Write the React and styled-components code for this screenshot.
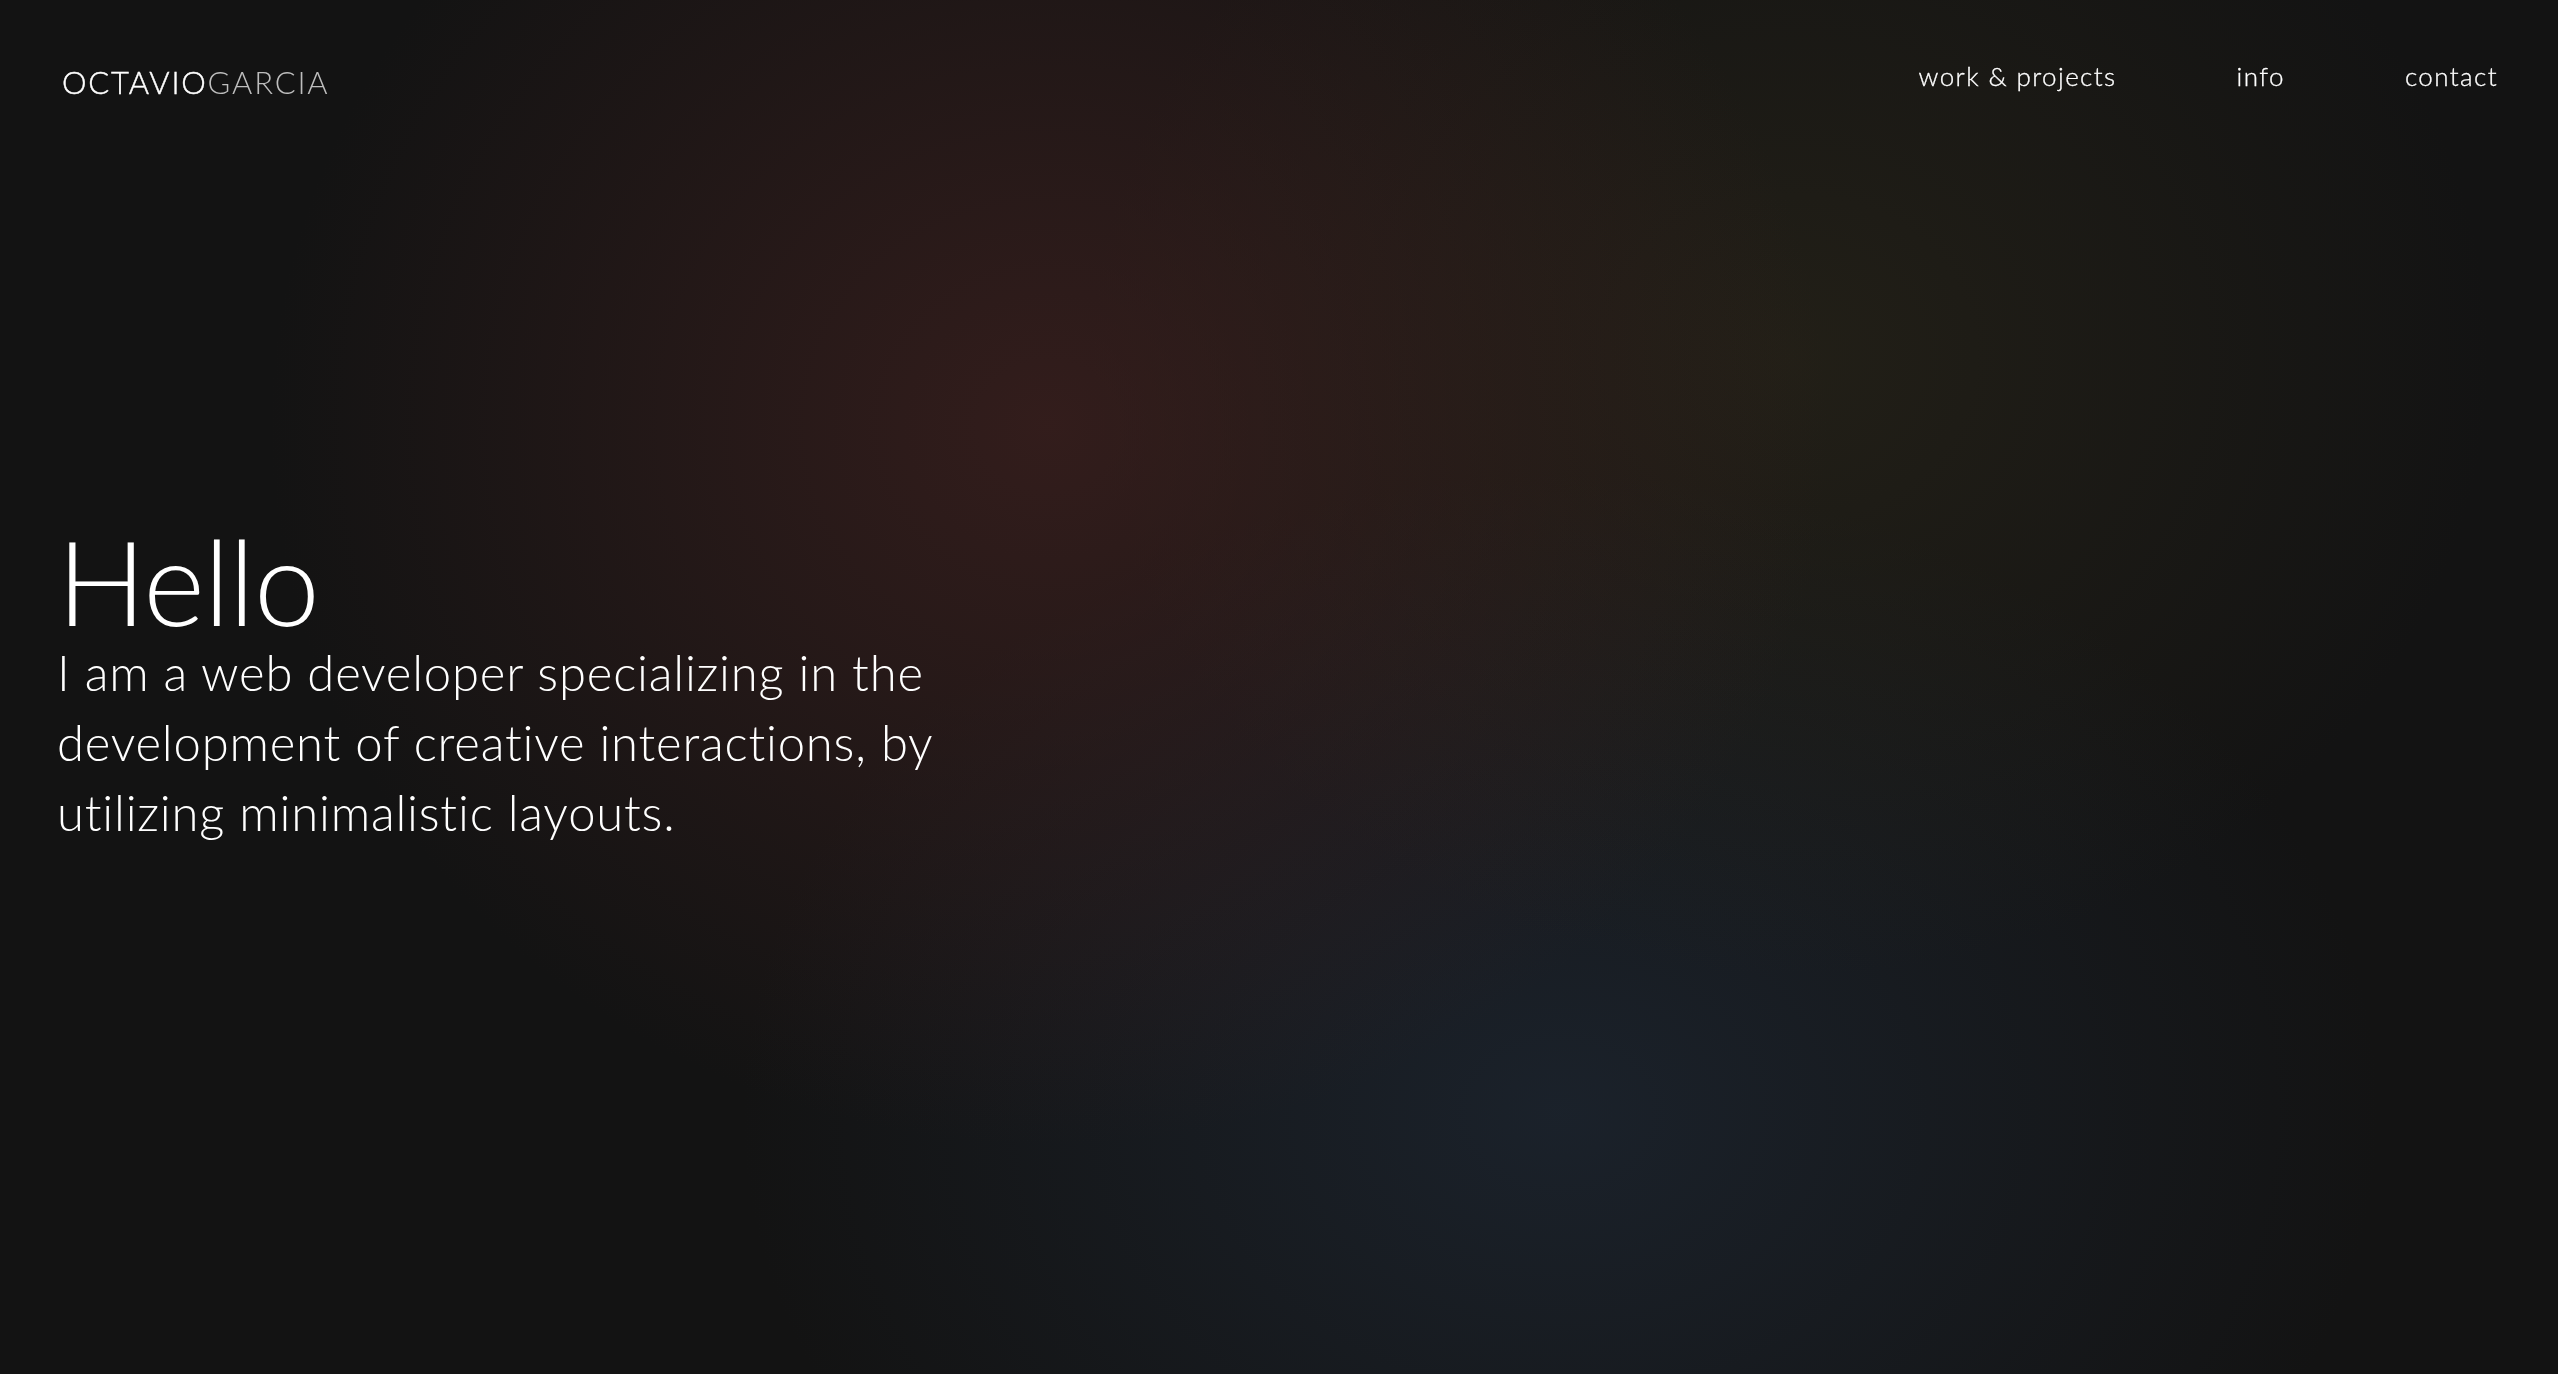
import styled, { createGlobalStyle } from "styled-components";

const GlobalStyle = createGlobalStyle`
  * { box-sizing: border-box; }
  body {
    margin: 0;
    background: #131313;
    color: #ffffff;
    font-family: Lato, "Open Sans", sans-serif;
  }
`;

export default function App() {
  return (
    <Page>
      <GlobalStyle />
      <Header>
        <Logo>
          OCTAVIO<span>GARCIA</span>
        </Logo>
        <Nav>
          <NavLink href="#work">work &amp; projects</NavLink>
          <NavLink href="#info">info</NavLink>
          <NavLink href="#contact">contact</NavLink>
        </Nav>
      </Header>
      <Hero>
        <Title>Hello</Title>
        <Intro>
          I am a web developer specializing in the development of creative
          interactions, by utilizing minimalistic layouts.
        </Intro>
      </Hero>
    </Page>
  );
}

const Page = styled.div`
  position: relative;
  height: 100vh;
  overflow: hidden;
  background:
    radial-gradient(ellipse 780px 720px at 41% 31%, rgba(74, 36, 34, 0.58), transparent 100%),
    radial-gradient(ellipse 700px 620px at 70% 26%, rgba(52, 46, 28, 0.45), transparent 100%),
    radial-gradient(ellipse 820px 640px at 61% 81%, rgba(34, 48, 66, 0.5), transparent 100%),
    #131313;
  display: flex;
  flex-direction: column;
`;

const Header = styled.header`
  position: fixed;
  top: 0;
  left: 0;
  right: 0;
  display: flex;
  justify-content: space-between;
  align-items: center;
  padding: 63px 60px 0 62px;
  z-index: 2;
`;

const Logo = styled.div`
  font-size: 31px;
  font-weight: 300;
  letter-spacing: 1.8px;
  color: #ffffff;
  -webkit-text-stroke: 0.4px #ffffff;

  span {
    -webkit-text-stroke: 0;
    color: #bdbdbd;
  }
`;

const Nav = styled.nav`
  display: flex;
  gap: 120px;
  margin-top: -12px;
`;

const NavLink = styled.a`
  color: #ffffff;
  text-decoration: none;
  font-size: 26px;
  font-weight: 300;
  letter-spacing: 1.4px;
  -webkit-text-stroke: 0.3px #ffffff;
`;

const Hero = styled.main`
  flex: 1;
  display: flex;
  flex-direction: column;
  justify-content: center;
  padding: 0 0 6px 57px;
`;

const Title = styled.h1`
  margin: 0;
  font-size: 118px;
  font-weight: 300;
  line-height: 1;
  letter-spacing: -1px;
  color: #ffffff;
`;

const Intro = styled.p`
  margin: -3px 0 0;
  width: 960px;
  font-size: 49px;
  font-weight: 300;
  line-height: 70px;
  letter-spacing: 0.8px;
  color: #ffffff;
`;
